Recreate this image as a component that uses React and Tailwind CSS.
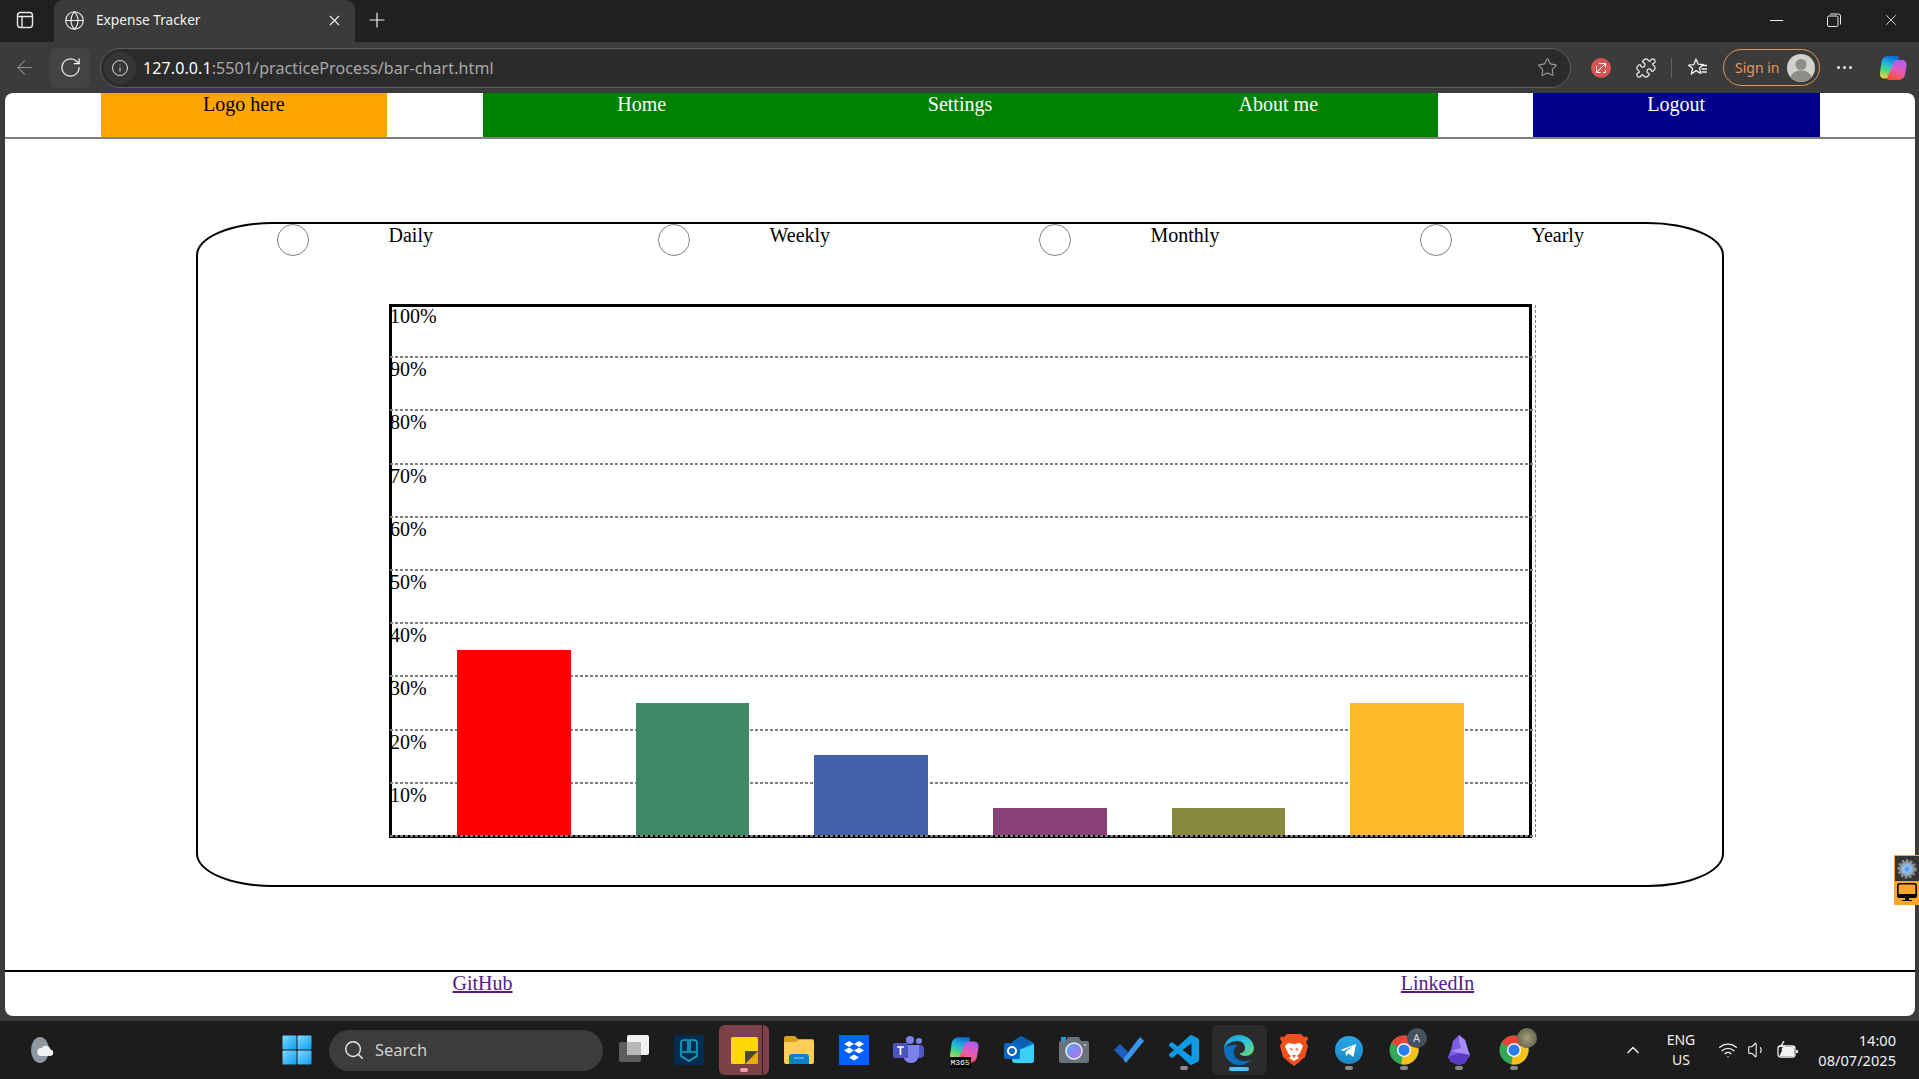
import React from "react";
import { Globe, X, Plus, ArrowLeft, RotateCw, Info, Star, Puzzle, Search, ChevronUp, Wifi, Volume1 } from "lucide-react";

const navLabel = "text-[20px] leading-[23px] text-center";

const Sidebar = () => (
  <svg width="18" height="18" viewBox="0 0 18 18" fill="none" stroke="#e8e8e8" strokeWidth="1.4">
    <rect x="1.5" y="1.5" width="15" height="15" rx="3" />
    <path d="M1.5 5.5h15M6 5.5v11" />
  </svg>
);
const Restore = () => (
  <svg width="14" height="14" viewBox="0 0 14 14" fill="none" stroke="#e8e8e8" strokeWidth="1">
    <rect x="0.5" y="3" width="10.5" height="10.5" rx="1.5" />
    <path d="M3 1h8.5a2 2 0 0 1 2 2v8.5" />
  </svg>
);
const FavStar = () => (
  <svg width="22" height="22" viewBox="0 0 22 22" fill="none" stroke="#f0f0f0" strokeWidth="1.3" strokeLinejoin="round">
    <path d="M9 2l2.2 5.2 5.3.4-4 3.5 1.2 5.3L9 13.6 4.3 17l1.3-5.4-4-3.4 5.2-.5z" />
    <path d="M14 8.5h6M14.5 12h5.5M14.5 15h5.5" />
  </svg>
);
const RedBadge = () => (
  <svg width="20" height="20" viewBox="0 0 20 20">
    <circle cx="10" cy="10" r="10" fill="#d75454" />
    <path d="M5.500 14.500L14.500 5.500M10.500 5.500h4v4M5.500 10.500v4h4M8 5.500h2M5.500 8v2M12 14.500h2.500V12M7.500 12.500l5-5" stroke="#fff" strokeWidth="1" fill="none" />
  </svg>
);
const Avatar = () => (
  <svg width="28" height="28" viewBox="0 0 28 28">
    <circle cx="14" cy="14" r="14" fill="#d2d0cc" />
    <circle cx="14" cy="10.5" r="5.5" fill="#8e8c88" />
    <path d="M3.5 23c2-5 6-6.5 10.500-6.500S22.500 18 24.500 23A14 14 0 0 1 3.500 23z" fill="#8e8c88" />
  </svg>
);
const Copilot = ({ id, size = 28 }) => (
  <svg width={size} height={size} viewBox="0 0 28 28">
    <defs>
      <linearGradient id={id + "a"} x1="0.500" y1="0" x2="0.200" y2="1">
        <stop offset="0" stopColor="#0f6fd8" />
        <stop offset="0.350" stopColor="#22b8d8" />
        <stop offset="0.650" stopColor="#52d67a" />
        <stop offset="1" stopColor="#f6d53a" />
      </linearGradient>
      <linearGradient id={id + "b"} x1="0.700" y1="0" x2="0.300" y2="1">
        <stop offset="0" stopColor="#a85ef0" />
        <stop offset="0.550" stopColor="#ee58b0" />
        <stop offset="1" stopColor="#f4522a" />
      </linearGradient>
    </defs>
    <path d="M9 2h9c1.500 0 2.200 1 1.700 2.500L14 22c-.5 1.500-1.800 2.500-3.500 2.500H5.500c-3.500 0-5-2.500-4.500-6L2.500 8C3 4.500 5.500 2 9 2z" fill={`url(#${id}a)`} />
    <path d="M17.500 6H23c3.500 0 5 2.500 4.500 6L26 20.500c-.5 3.300-3.500 5.500-7 5.500H10c-1.500 0-2.200-1-1.700-2.500L15 8c.4-1.200 1.300-2 2.500-2z" fill={`url(#${id}b)`} />
  </svg>
);
const Weather = () => (
  <svg width="30" height="30" viewBox="0 0 30 30">
    <ellipse cx="13" cy="15" rx="9" ry="13" fill="#8f99a3" />
    <path d="M14 21a4 4 0 0 1 .5-8 5 5 0 0 1 9 1.500 3.300 3.300 0 0 1 0 6.500z" fill="#f1f1f1" />
  </svg>
);
const StartLogo = () => (
  <svg width="30" height="30" viewBox="0 0 30 30">
    <defs>
      <linearGradient id="sl" x1="0" y1="0" x2="1" y2="1">
        <stop offset="0" stopColor="#7fdcff" />
        <stop offset="1" stopColor="#0a9cf5" />
      </linearGradient>
    </defs>
    <rect x="0.500" y="0.500" width="14" height="14" rx="1" fill="url(#sl)" />
    <rect x="15.500" y="0.500" width="14" height="14" rx="1" fill="url(#sl)" />
    <rect x="0.500" y="15.500" width="14" height="14" rx="1" fill="url(#sl)" />
    <rect x="15.500" y="15.500" width="14" height="14" rx="1" fill="url(#sl)" />
  </svg>
);
const TaskView = () => (
  <svg width="30" height="30" viewBox="0 0 30 30">
    <rect x="8" y="0" width="22" height="20" rx="2" fill="#f1f1f1" />
    <rect x="0" y="7" width="22" height="20" rx="2" fill="#5d5d5d" />
    <rect x="8" y="7" width="14" height="13" fill="#b8b8b8" />
  </svg>
);
const Shield = () => (
  <svg width="30" height="30" viewBox="0 0 30 30">
    <rect width="30" height="30" fill="#032c52" />
    <path d="M7 17V8a3 3 0 0 1 3-3h4v12H8M23 17V8a3 3 0 0 0-3-3h-4v12h6M7 17v4l8 5 8-5v-4" fill="none" stroke="#17a7c4" strokeWidth="1.600" />
  </svg>
);
const Sticky = () => (
  <svg width="27" height="27" viewBox="0 0 27 27">
    <rect width="27" height="27" rx="1.500" fill="#fdd800" />
    <path d="M27 13v12.500a1.500 1.500 0 0 1-1.500 1.500H13z" fill="#e7aa00" />
    <path d="M14 14h13L14 27z" fill="#4a4642" />
  </svg>
);
const Folder = () => (
  <svg width="30" height="28" viewBox="0 0 30 28">
    <path d="M0 2a2 2 0 0 1 2-2h9l3 3h14a2 2 0 0 1 2 2v3H0z" fill="#d99f1a" />
    <path d="M0 6h12l3-2h13a2 2 0 0 1 2 2v20a2 2 0 0 1-2 2H2a2 2 0 0 1-2-2z" fill="#fbcf5a" />
    <path d="M5 21a3 3 0 0 1 3-3h14a3 3 0 0 1 3 3v7H5z" fill="#0f7fc9" />
    <path d="M10 22h10" stroke="#9fd8ff" strokeWidth="1" />
  </svg>
);
const Dropbox = () => (
  <svg width="30" height="30" viewBox="0 0 30 30">
    <rect width="30" height="30" fill="#0061fe" />
    <path d="M10 6l5 3-5 3-5-3zM20 6l5 3-5 3-5-3zM10 12.500l5 3-5 3-5-3zM20 12.500l5 3-5 3-5-3zM15 19.500l5 3-5 3-5-3z" fill="#fff" />
  </svg>
);
const Teams = () => (
  <svg width="32" height="28" viewBox="0 0 32 28">
    <circle cx="26" cy="5" r="3" fill="#7b83eb" />
    <circle cx="17" cy="4" r="4" fill="#7b83eb" />
    <rect x="22" y="9" width="9" height="13" rx="4" fill="#5059c9" />
    <path d="M10 9h16v10a8 8 0 0 1-16 0z" fill="#7b83eb" />
    <rect x="0" y="7" width="15" height="15" rx="1.500" fill="#4b53bc" />
    <path d="M4 11h7M7.500 11v8" stroke="#fff" strokeWidth="1.700" />
  </svg>
);
const Outlook = () => (
  <svg width="30" height="28" viewBox="0 0 30 28">
    <path d="M8 6l9-6 11 6 2 2v16a3 3 0 0 1-3 3H13l-5-5z" fill="#0f78d4" />
    <path d="M17 0l11 6-9 6H8V6z" fill="#0a5fb0" />
    <path d="M8 17l22-9v16a3 3 0 0 1-3 3H11a3 3 0 0 1-3-3z" fill="#38d0f5" />
    <rect x="0" y="7" width="16" height="16" rx="2" fill="#0b66c3" />
    <circle cx="8" cy="15" r="4" fill="none" stroke="#fff" strokeWidth="2" />
  </svg>
);
const Camera = () => (
  <svg width="30" height="26" viewBox="0 0 30 26">
    <defs>
      <linearGradient id="cm" x1="0" y1="0" x2="1" y2="1">
        <stop offset="0" stopColor="#4ca7f5" />
        <stop offset="1" stopColor="#c268e8" />
      </linearGradient>
    </defs>
    <rect x="2" y="0" width="5" height="4" fill="#1e9be8" />
    <path d="M9 0h11l2 4h6a2 2 0 0 1 2 2v18a2 2 0 0 1-2 2H2a2 2 0 0 1-2-2V6a2 2 0 0 1 2-2h5z" fill="#68737d" />
    <circle cx="15" cy="14" r="8" fill="url(#cm)" stroke="#e8ecef" strokeWidth="1.500" />
    <circle cx="26" cy="8" r="1" fill="#d4d8dc" />
  </svg>
);
const Todo = () => (
  <svg width="30" height="26" viewBox="0 0 30 26">
    <path d="M0 13l6-6 8 8-5 7z" fill="#1d5dc4" />
    <path d="M9 22L26 0l4 4-18 22z" fill="#3a96ec" />
  </svg>
);
const VsCode = () => (
  <svg width="30" height="30" viewBox="0 0 24 24">
    <path fill="#0f9be3" d="M23.150 2.587 18.210.21a1.494 1.494 0 0 0-1.705.29l-9.460 8.630-4.120-3.128a.999.999 0 0 0-1.276.057L.327 7.261A1 1 0 0 0 .326 8.740L3.899 12 .326 15.260a1 1 0 0 0 .001 1.479L1.650 17.940a.999.999 0 0 0 1.276.057l4.120-3.128 9.460 8.630a1.492 1.492 0 0 0 1.704.29l4.942-2.377A1.500 1.500 0 0 0 24 20.060V3.939a1.500 1.500 0 0 0-.850-1.352zm-5.146 14.861L10.826 12l7.178-5.448v10.896z" />
  </svg>
);
const Edge = () => (
  <svg width="32" height="32" viewBox="0 0 32 32">
    <defs>
      <linearGradient id="ed" x1="0" y1="0" x2="1" y2="1">
        <stop offset="0" stopColor="#1a8fd8" />
        <stop offset="0.550" stopColor="#33c6d6" />
        <stop offset="1" stopColor="#6edb5f" />
      </linearGradient>
    </defs>
    <path d="M1 15C1 7 8 1 16 1c9 0 15 7 15 13 0 5-4 8-9 8-3 0-5-1-5-3 3 0 5-2 5-5 0-4-3-7-7-7C9 7 3 10 1 15z" fill="url(#ed)" />
    <path d="M1 15c0 9 7 16 15 16 5 0 9-2 12-5-5 2-13 2-16-4-2-4-1-9 3-11C9 11 3 11 1 15z" fill="#0c6fc0" />
    <path d="M12 22c-3-6 0-11 3-11-4 1-6 6-4 11 2 4 7 6 11 5-4 0-8-2-10-5z" fill="#0a4d92" />
  </svg>
);
const Brave = () => (
  <svg width="28" height="32" viewBox="0 0 28 32">
    <path d="M7 0h14l3 3 3-.5L28 5l-2 3 2 4-3 11-7 6-4 3-4-3-7-6L0 12l2-4-2-3 1-2.500L4 3z" fill="#f2501e" />
    <path d="M8 9l6 1 6-1 3 3-3 7-3 3 2 2-5 3-5-3 2-2-3-3-3-7z" fill="#fff" />
    <path d="M10 14l3 1-2 2zM18 14l-3 1 2 2zM12 21h4l-2 3z" fill="#f2501e" />
  </svg>
);
const Telegram = () => (
  <svg width="28" height="28" viewBox="0 0 28 28">
    <defs>
      <linearGradient id="tg" x1="0" y1="0" x2="0" y2="1">
        <stop offset="0" stopColor="#2aa9e6" />
        <stop offset="1" stopColor="#1a86c4" />
      </linearGradient>
    </defs>
    <circle cx="14" cy="14" r="14" fill="url(#tg)" />
    <path d="M5.500 14L21 8l-2.500 13-5-3.500-2.500 2.500-.5-4 8-6.500-9.500 5.500z" fill="#fff" />
  </svg>
);
const ChromeLogo = () => (
  <svg width="30" height="30" viewBox="0 0 32 32">
    <circle cx="16" cy="16" r="15.500" fill="#34a853" />
    <path d="M2.600 8.300a15.500 15.500 0 0 1 26.800 0L16 16z" fill="#ea4335" />
    <path d="M29.400 8.300A15.500 15.500 0 0 1 13 31.200L16 16z" fill="#fbc116" />
    <circle cx="16" cy="16" r="7.500" fill="#fff" />
    <circle cx="16" cy="16" r="6" fill="#2b7cf0" />
  </svg>
);
const Obsidian = () => (
  <svg width="22" height="30" viewBox="0 0 22 30">
    <path d="M11 0l6 5 3 10 2 5-5 8-6 2-8-3-3-5 3-7 2-9z" fill="#7c5de8" />
    <path d="M11 0l6 5 3 10-7-2-2-6z" fill="#a58cf5" />
    <path d="M3 16l10-3 7 2 2 5-11-2z" fill="#c2b0fb" opacity="0.550" />
    <path d="M0 22l11-4 11 2-5 8-6 2-8-3z" fill="#5a3bc4" />
  </svg>
);
const Gear = () => (
  <svg width="20" height="20" viewBox="0 0 20 20">
    <defs>
      <radialGradient id="gr">
        <stop offset="0" stopColor="#3c8cff" />
        <stop offset="0.500" stopColor="#93c2ee" />
        <stop offset="1" stopColor="#8a8a8a" />
      </radialGradient>
    </defs>
    <circle cx="10" cy="10" r="7.500" fill="url(#gr)" stroke="#8a8a8a" strokeWidth="1" />
    <circle cx="10" cy="10" r="8.500" fill="none" stroke="#8a8a8a" strokeWidth="2.500" strokeDasharray="2.500 1.800" />
  </svg>
);
const Monitor = () => (
  <svg width="20" height="18" viewBox="0 0 20 18">
    <rect x="0.800" y="0.800" width="18.400" height="12.400" rx="2" fill="none" stroke="#000" strokeWidth="1.600" />
    <path d="M0 11h20v2a2 2 0 0 1-2 2H2a2 2 0 0 1-2-2zM8 15h4v2h3v1H5v-1h3z" fill="#000" />
  </svg>
);
const Battery = () => (
  <svg width="22" height="18" viewBox="0 0 22 18" fill="none" stroke="#f2f2f2" strokeWidth="1.300">
    <rect x="1" y="5" width="17" height="11" rx="2.500" />
    <path d="M20 9v3" strokeWidth="1.800" />
    <path d="M2.500 15l4-9h10.500v9z" fill="#f2f2f2" stroke="none" />
    <path d="M7 0L4 5h3l-2 4" strokeWidth="1.400" />
  </svg>
);

function Pill({ on }) {
  return (
    <span className={on ? "absolute bottom-[4px] left-1/2 -translate-x-1/2 w-[20px] h-[4px] rounded-full bg-[#4cc2ff]" : "absolute bottom-[5px] left-1/2 -translate-x-1/2 w-[8px] h-[4px] rounded-full bg-[#8a8a8a]"} />
  );
}
function Slot({ children, pill, active }) {
  return (
    <div className={"relative w-[55px] h-[50px] flex items-center justify-center rounded-md " + (active ? "bg-[#2b2b2b]" : "")}>
      {children}
      {pill && <Pill on={active} />}
    </div>
  );
}

const grid = ["100%", "90%", "80%", "70%", "60%", "50%", "40%", "30%", "20%", "10%"];
const bars = [
  ["h-[185px]", "bg-[#ff0000]"],
  ["h-[132px]", "bg-[#408868]"],
  ["h-[80px]", "bg-[#4460a8]"],
  ["h-[27px]", "bg-[#884078]"],
  ["h-[27px]", "bg-[#888840]"],
  ["h-[132px]", "bg-[#ffbb28]"],
];
const periods = ["Daily", "Weekly", "Monthly", "Yearly"];

export default function App() {
  return (
    <div className="relative w-[1919px] h-[1079px] overflow-hidden flex flex-col bg-[#3b3b3b] [font-family:'Noto_Sans',sans-serif] text-white">
      {/* tab strip */}
      <div className="h-[42px] shrink-0 bg-[#202020] flex items-center">
        <div className="w-[50px] mr-[4px] pb-[2px] flex justify-center"><Sidebar /></div>
        <div className="w-[301px] h-[42px] pb-[2px] bg-[#3b3b3b] rounded-t-[9px] flex items-center">
          <Globe size={21} strokeWidth={1.3} color="#f0f0f0" className="ml-[10px]" />
          <span className="ml-[11px] text-[13.700px] leading-[18px] text-[#f2f2f2]">Expense Tracker</span>
          <X size={17} strokeWidth={1.6} color="#f0f0f0" className="ml-auto mr-[12px]" />
        </div>
        <div className="ml-[10px] w-[24px] pb-[2px] flex justify-center"><Plus size={24} strokeWidth={1.2} color="#f0f0f0" /></div>
        <div className="ml-auto flex pb-[2px] items-center">
          <div className="w-[57px] flex justify-center"><span className="w-[13px] h-[1px] bg-[#f0f0f0]" /></div>
          <div className="w-[57px] flex justify-center"><Restore /></div>
          <div className="w-[57px] flex justify-center"><X size={18} strokeWidth={1.1} color="#f0f0f0" /></div>
        </div>
      </div>

      {/* toolbar */}
      <div className="h-[51px] shrink-0 flex items-center">
        <ArrowLeft size={23} strokeWidth={1.1} color="#8f8f8f" className="ml-[13px]" />
        <div className="ml-[14px] w-[40px] h-[40px] rounded-md bg-[#434343] flex items-center justify-center"><RotateCw size={23} strokeWidth={1.3} color="#f0f0f0" /></div>
        <div className="ml-[10px] w-[1471px] h-[40px] rounded-full border border-[#5f5f5f] bg-[#2b2b2b] flex items-center">
          <div className="ml-[3px] w-[32px] h-[32px] rounded-full bg-[#363636] flex items-center justify-center"><Info size={18} strokeWidth={1.3} color="#e0e0e0" /></div>
          <span className="ml-[7px] text-[16px] leading-[22px] tracking-[0.1px] text-[#a9a9a9] whitespace-nowrap"><span className="text-white">127.0.0.1</span>:5501/practiceProcess/bar-chart.html</span>
          <Star size={21} strokeWidth={1.2} color="#a0a0a0" className="ml-auto mr-[12px]" />
        </div>
        <div className="ml-[20px]"><RedBadge /></div>
        <Puzzle size={22} strokeWidth={1.3} color="#f0f0f0" className="ml-[24px]" />
        <span className="ml-[14px] w-[1px] h-[20px] bg-[#5f5f5f]" />
        <div className="ml-[15px]"><FavStar /></div>
        <div className="ml-[14px] w-[97px] h-[37px] rounded-full border border-[#e5975a] flex items-center">
          <span className="ml-[11px] text-[14px] leading-[20px] text-[#e5975a]">Sign in</span>
          <div className="ml-auto mr-[4px]"><Avatar /></div>
        </div>
        <div className="ml-[17px] flex gap-[3px]">
          <span className="w-[3px] h-[3px] rounded-full bg-[#f0f0f0]" />
          <span className="w-[3px] h-[3px] rounded-full bg-[#f0f0f0]" />
          <span className="w-[3px] h-[3px] rounded-full bg-[#f0f0f0]" />
        </div>
        <div className="ml-[27px]"><Copilot id="cp1" /></div>
      </div>

      {/* page */}
      <div className="h-[923px] shrink-0 ml-[5px] mr-[4px] bg-white rounded-[8px] overflow-hidden flex flex-col text-black [font-family:'Liberation_Serif',serif]">
        <nav className="h-[46px] shrink-0 border-b-2 border-[#808080] grid grid-cols-[5%_15%_5%_50%_5%_15%_5%]">
          <div />
          <div className={"bg-[#ffa500] " + navLabel}>Logo here</div>
          <div />
          <div className="bg-[#008000] text-white grid grid-cols-3">
            <div className={navLabel}>Home</div>
            <div className={navLabel}>Settings</div>
            <div className={navLabel}>About me</div>
          </div>
          <div />
          <div className={"bg-[#00008b] text-white " + navLabel}>Logout</div>
          <div />
        </nav>

        <main className="flex-1 pt-[83px] pl-[191px]">
          <section className="w-[1528px] h-[665px] border-2 border-black rounded-[5%]">
            <div className="grid grid-cols-4">
              {periods.map((p) => (
                <div key={p} className="grid grid-cols-2">
                  <div className="flex justify-center"><span className="w-[32px] h-[32px] rounded-full border border-[#808080]" /></div>
                  <span className="text-[20px] leading-[23px]">{p}</span>
                </div>
              ))}
            </div>
            <div className="relative mt-[48px] ml-[191px] w-[1143px] h-[534px] border-[3px] border-black">
              <div className="absolute -left-[2px] -top-[2px] w-[1146px] border-r border-dashed border-[#808080]">
                {grid.map((g) => (
                  <div key={g} className="h-[53.200px] flex flex-col justify-between text-[20px] leading-[23px]">
                    <span>{g}</span>
                    <span className="h-[2px] bg-[repeating-linear-gradient(90deg,#808080_0_3px,transparent_3px_5px)]" />
                  </div>
                ))}
              </div>
              <div className="relative h-full flex items-end justify-evenly">
                {bars.map(([h, c], i) => (
                  <div key={i} className={"w-[10%] " + h + " " + c} />
                ))}
              </div>
            </div>
          </section>
        </main>

        <footer className="h-[46px] shrink-0 border-t-2 border-black grid grid-cols-2 text-center text-[20px] leading-[23px]">
          <div><a href="#github" className="text-[#551a8b] underline">GitHub</a></div>
          <div><a href="#linkedin" className="text-[#551a8b] underline">LinkedIn</a></div>
        </footer>
      </div>

      {/* side widget */}
      <div className="absolute left-[1894px] top-[855px] w-[25px] h-[50px] bg-[#ffa52e] flex flex-col items-center">
        <div className="mt-[1px] ml-[1px] w-[24px] h-[25px] bg-[#333333] flex items-center justify-center"><Gear /></div>
        <div className="mt-[2px] ml-[1px]"><Monitor /></div>
      </div>

      {/* taskbar */}
      <div className="mt-[5px] h-[58px] shrink-0 bg-[#1c1c1c] flex items-center">
        <div className="ml-[27px]"><Weather /></div>
        <div className="ml-[225px]"><StartLogo /></div>
        <div className="ml-[17px] w-[274px] h-[41px] rounded-full bg-[#3c3c3c] flex items-center">
          <Search size={22} strokeWidth={1.6} color="#e8e8e8" className="ml-[14px]" />
          <span className="ml-[10px] text-[16.500px] leading-[22px] text-[#cfcfcf]">Search</span>
        </div>
        <div className="ml-[3.500px] flex items-center">
          <Slot><TaskView /></Slot>
          <Slot><Shield /></Slot>
          <div className="relative w-[55px] h-[50px] flex items-center justify-center">
            <div className="absolute left-[2px] w-[50px] h-[50px] rounded-md bg-[#7d4148]" />
            <div className="absolute left-[45px] w-[1px] h-[50px] bg-[#2a2020]" />
            <div className="relative"><Sticky /></div>
            <span className="absolute bottom-[3px] left-1/2 -translate-x-1/2 w-[8px] h-[4px] rounded-full bg-[#f29db0]" />
          </div>
          <Slot><Folder /></Slot>
          <Slot><Dropbox /></Slot>
          <Slot><Teams /></Slot>
          <Slot>
            <Copilot id="cp2" size={30} />
            <span className="absolute left-[13px] top-[32px] px-[1px] bg-black text-white text-[8px] leading-[11px] [font-family:'Liberation_Mono',monospace]">M365</span>
          </Slot>
          <Slot><Outlook /></Slot>
          <Slot><Camera /></Slot>
          <Slot><Todo /></Slot>
          <Slot pill><VsCode /></Slot>
          <Slot pill active><Edge /></Slot>
          <Slot><Brave /></Slot>
          <Slot pill><Telegram /></Slot>
          <Slot pill>
            <ChromeLogo />
            <span className="absolute left-[30px] top-[3px] w-[20px] h-[20px] rounded-full bg-[#43525e] text-[#d8dde0] text-[11px] leading-[20px] text-center">A</span>
          </Slot>
          <Slot pill><Obsidian /></Slot>
          <Slot pill>
            <ChromeLogo />
            <span className="absolute left-[30px] top-[3px] w-[20px] h-[20px] rounded-full bg-[radial-gradient(circle,#a89a78,#4e5a44)]" />
          </Slot>
        </div>
        <ChevronUp size={20} strokeWidth={1.8} color="#f2f2f2" className="ml-[81.500px]" />
        <div className="ml-[18px] w-[40px] text-center text-[14px] leading-[20px] text-[#f2f2f2]">
          <div>ENG</div>
          <div>US</div>
        </div>
        <Wifi size={20} strokeWidth={1.6} color="#f2f2f2" className="ml-[17px]" />
        <Volume1 size={20} strokeWidth={1.3} color="#f2f2f2" className="ml-[9px]" />
        <div className="ml-[10px]"><Battery /></div>
        <div className="w-[97px] text-right text-[14.600px] leading-[20px] text-[#f2f2f2]">
          <div>14:00</div>
          <div>08/07/2025</div>
        </div>
      </div>
    </div>
  );
}
